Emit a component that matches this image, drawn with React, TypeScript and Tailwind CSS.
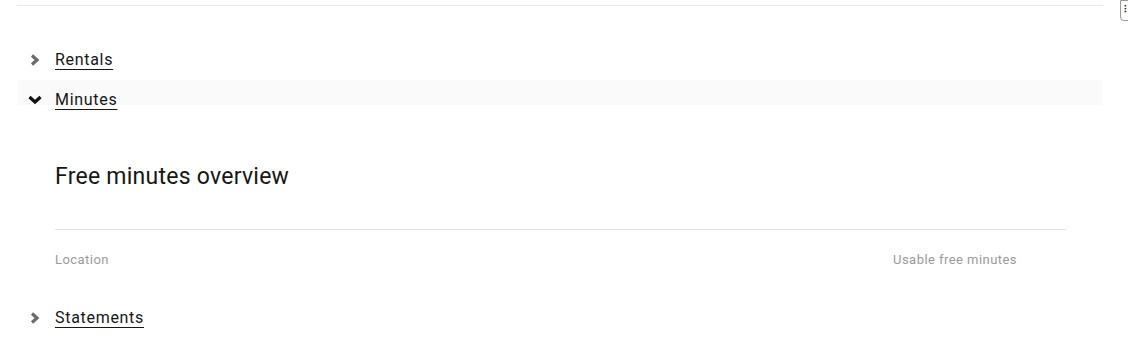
import React from "react";

const ChevronRight = () => (
  <svg width="10" height="12" viewBox="0 0 10 12" className="shrink-0">
    <polyline points="2,1.5 7,6 2,10.5" fill="none" stroke="#6b6b6b" strokeWidth="3.2" strokeLinejoin="miter" />
  </svg>
);

const ChevronDown = () => (
  <svg width="14" height="10" viewBox="0 0 14 10" className="shrink-0">
    <polyline points="1.5,2 7,7 12.5,2" fill="none" stroke="#111" strokeWidth="3.2" strokeLinejoin="miter" />
  </svg>
);

const Row = ({ label, open = false }: { label: string; open?: boolean }) => (
  <div
    className={`h-[40px] flex items-center ${
      open ? "bg-[linear-gradient(to_bottom,#fafafa_25px,transparent_25px)]" : ""
    }`}
  >
    <div className={`w-[38px] flex ${open ? "pl-[11px]" : "pl-[13px]"}`}>{open ? <ChevronDown /> : <ChevronRight />}</div>
    <a
      href="#"
      className="text-[16px] tracking-[0.7px] text-[#161616] underline underline-offset-[4px] decoration-1"
    >
      {label}
    </a>
  </div>
);

export default function App() {
  return (
    <div className="relative w-full h-[349px] overflow-hidden bg-white font-['Roboto',sans-serif]">
      <div className="absolute top-0 left-[1120px] w-[20px] h-[21px] border border-[#9a9a9a] rounded-bl-[4px] bg-white flex pl-[3px] pt-[3px]">
        <span className="text-[10px] leading-none font-bold text-[#222]">⁝</span>
      </div>

      <div className="pl-[17px] pr-[25px]">
        <div className="mt-[5px] h-px bg-[#e6e6e6]" />
        <div className="h-[34px]" />
        <Row label="Rentals" />
        <Row label="Minutes" open />

        <div className="pl-[38px] pr-[37px] pt-[43px]">
          <h2 className="text-[23px] leading-[28px] tracking-[0.25px] text-[#161616]">Free minutes overview</h2>
          <div className="mt-[38px] h-px bg-[#e3e3e3]" />
          <div className="flex justify-between pr-[49px] pt-[21px] text-[13px] leading-[18px] tracking-[0.45px] text-[#9a9a9a]">
            <span>Location</span>
            <span>Usable free minutes</span>
          </div>
        </div>

        <div className="h-[29px]" />
        <Row label="Statements" />
      </div>
    </div>
  );
}
